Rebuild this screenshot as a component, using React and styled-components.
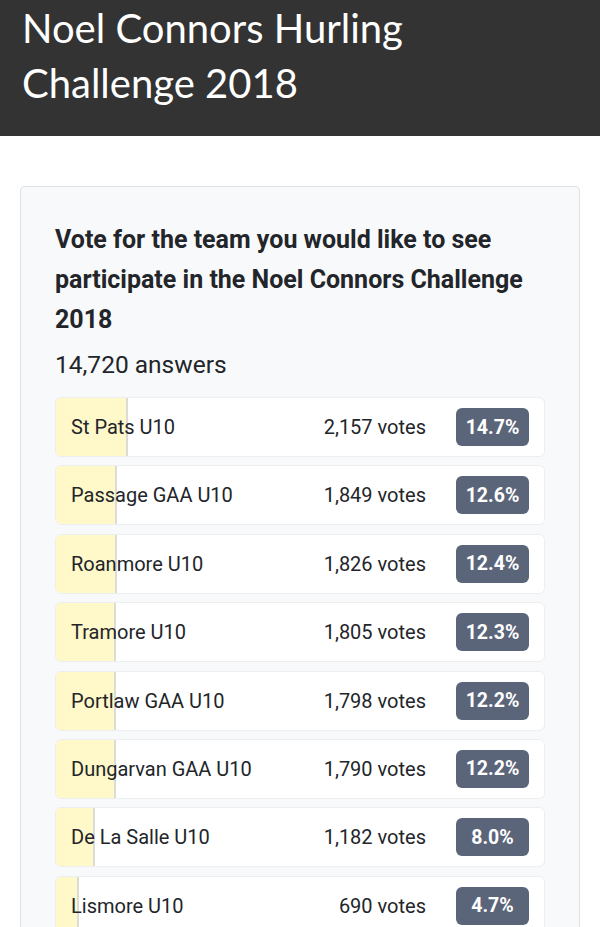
import React from "react";
import styled, { createGlobalStyle } from "styled-components";

const GlobalStyle = createGlobalStyle`
  html, body {
    margin: 0;
    padding: 0;
    background: #ffffff;
  }
  body {
    font-family: Roboto, "Liberation Sans", sans-serif;
    color: #212529;
  }
`;

const Header = styled.header`
  background-color: #333333;
  color: #ffffff;
  height: 136px;
  box-sizing: border-box;
  padding: 1px 22px 0;
`;

const Title = styled.h1`
  margin: 0;
  font-family: Lato, "Open Sans", sans-serif;
  font-weight: 400;
  font-size: 40px;
  line-height: 55px;
`;

const Main = styled.main`
  padding: 50px 20px 0 20px;
`;

const Card = styled.section`
  background-color: #f8f9fa;
  border: 1px solid #dfe1e3;
  border-bottom: none;
  border-radius: 5px 5px 0 0;
  padding: 33px 34px 40px;
`;

const Question = styled.h2`
  margin: 0;
  font-size: 25px;
  font-weight: 700;
  line-height: 40px;
  color: #222529;
`;

const Answers = styled.div`
  font-size: 24.5px;
  line-height: 36px;
  margin: 7px 0 14px;
  color: #222529;
`;

const List = styled.ul`
  list-style: none;
  margin: 0;
  padding: 0;
  display: flex;
  flex-direction: column;
  gap: 8.4px;
`;

const Row = styled.li`
  position: relative;
  height: 60px;
  background: #ffffff;
  border: 1px solid #eceeef;
  border-radius: 6px;
  overflow: hidden;
  display: flex;
  align-items: center;
  padding: 0 15px 0 15px;
  box-sizing: border-box;
  font-size: 20px;
`;

const Fill = styled.div`
  position: absolute;
  left: 0;
  top: 0;
  bottom: 0;
  box-sizing: border-box;
  background: #fff8c9;
  border-right: 2px solid #dcdcd6;
`;

const Name = styled.span`
  position: relative;
  flex: 1;
  color: #222529;
`;

const Votes = styled.span`
  position: relative;
  color: #222529;
  margin-right: 30px;
`;

const Badge = styled.span`
  position: relative;
  width: 73px;
  height: 38px;
  border-radius: 6px;
  background: #5b657a;
  color: #ffffff;
  font-weight: 700;
  font-size: 19.5px;
  display: flex;
  align-items: center;
  justify-content: center;
`;

const results = [
  { name: "St Pats U10", votes: "2,157", pct: 14.7 },
  { name: "Passage GAA U10", votes: "1,849", pct: 12.6 },
  { name: "Roanmore U10", votes: "1,826", pct: 12.4 },
  { name: "Tramore U10", votes: "1,805", pct: 12.3 },
  { name: "Portlaw GAA U10", votes: "1,798", pct: 12.2 },
  { name: "Dungarvan GAA U10", votes: "1,790", pct: 12.2 },
  { name: "De La Salle U10", votes: "1,182", pct: 8.0 },
  { name: "Lismore U10", votes: "690", pct: 4.7 },
];

export default function App() {
  return (
    <>
      <GlobalStyle />
      <Header>
        <Title>Noel Connors Hurling Challenge 2018</Title>
      </Header>
      <Main>
        <Card>
          <Question>
            Vote for the team you would like to see participate in the Noel
            Connors Challenge 2018
          </Question>
          <Answers>14,720 answers</Answers>
          <List>
            {results.map((r) => (
              <Row key={r.name}>
                <Fill style={{ width: `${r.pct}%` }} />
                <Name>{r.name}</Name>
                <Votes>{r.votes} votes</Votes>
                <Badge>{r.pct.toFixed(1)}%</Badge>
              </Row>
            ))}
          </List>
        </Card>
      </Main>
    </>
  );
}
